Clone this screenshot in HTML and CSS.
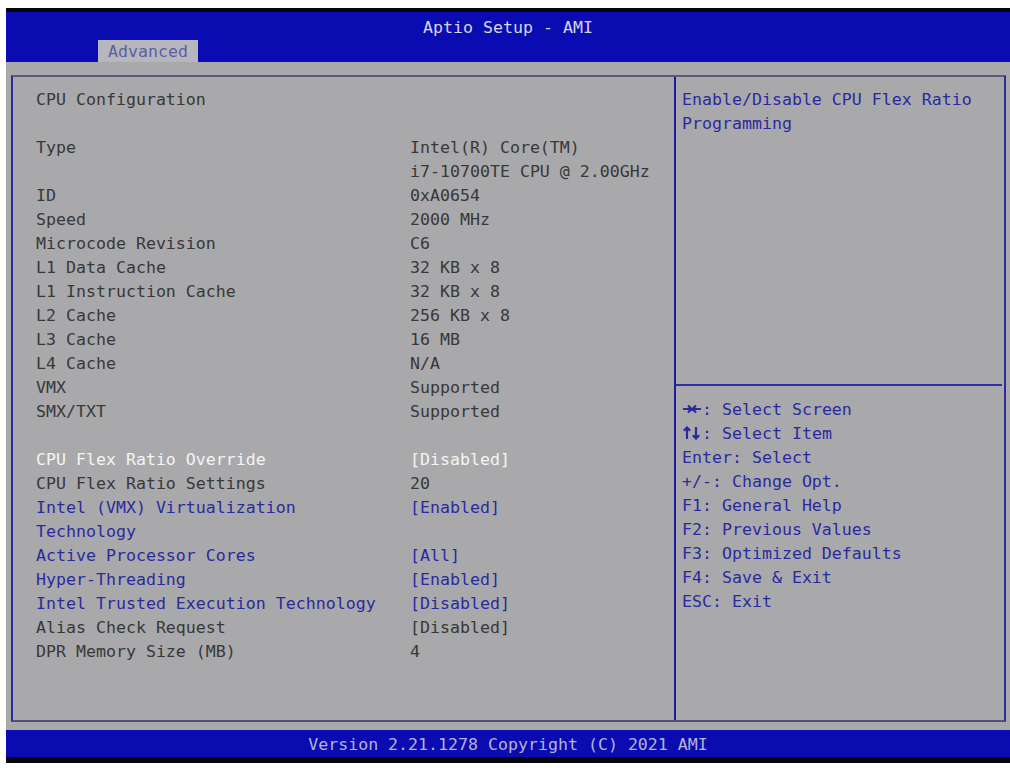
FILE: index.html
```html
<!DOCTYPE html>
<html>
<head>
  <title>Aptio Setup - AMI</title>
  <link rel="stylesheet" href="styles.css">
</head>
<body>

<div class="screen">
  <div class="header">
    <div class="title">Aptio Setup - AMI</div>
    <div class="tabs"><span class="tab">Advanced</span></div>
  </div>

  <div class="main">
    <div class="panel">
      <div class="items">
        <div class="row"><span>CPU Configuration</span><span></span></div>
        <div class="row"><span>&nbsp;</span><span></span></div>
        <div class="row"><span>Type</span><span>Intel(R) Core(TM)</span></div>
        <div class="row"><span></span><span>i7-10700TE CPU @ 2.00GHz</span></div>
        <div class="row"><span>ID</span><span>0xA0654</span></div>
        <div class="row"><span>Speed</span><span>2000 MHz</span></div>
        <div class="row"><span>Microcode Revision</span><span>C6</span></div>
        <div class="row"><span>L1 Data Cache</span><span>32 KB x 8</span></div>
        <div class="row"><span>L1 Instruction Cache</span><span>32 KB x 8</span></div>
        <div class="row"><span>L2 Cache</span><span>256 KB x 8</span></div>
        <div class="row"><span>L3 Cache</span><span>16 MB</span></div>
        <div class="row"><span>L4 Cache</span><span>N/A</span></div>
        <div class="row"><span>VMX</span><span>Supported</span></div>
        <div class="row"><span>SMX/TXT</span><span>Supported</span></div>
        <div class="row"><span>&nbsp;</span><span></span></div>
        <div class="row selected"><span>CPU Flex Ratio Override</span><span>[Disabled]</span></div>
        <div class="row"><span>CPU Flex Ratio Settings</span><span>20</span></div>
        <div class="row option"><span>Intel (VMX) Virtualization</span><span>[Enabled]</span></div>
        <div class="row option"><span>Technology</span><span></span></div>
        <div class="row option"><span>Active Processor Cores</span><span>[All]</span></div>
        <div class="row option"><span>Hyper-Threading</span><span>[Enabled]</span></div>
        <div class="row option"><span>Intel Trusted Execution Technology</span><span>[Disabled]</span></div>
        <div class="row"><span>Alias Check Request</span><span>[Disabled]</span></div>
        <div class="row"><span>DPR Memory Size (MB)</span><span>4</span></div>
      </div>

      <div class="side">
        <div class="help">Enable/Disable CPU Flex Ratio<br>Programming</div>
        <div class="keys">
          <div>
            <svg class="arrows" width="20" height="14" viewBox="0 0 20 14"><path d="M1 7H9M6 3.5L9.5 7L6 10.5M19 7H11M14 3.5L10.5 7L14 10.5" fill="none" stroke="currentColor" stroke-width="2.2"/></svg>: Select Screen
          </div>
          <div>
            <svg class="arrows" width="20" height="14" viewBox="0 0 20 14"><path d="M5 13V1.5M1.8 4.8L5 1.5L8.2 4.8M14 1V12.5M10.8 9.2L14 12.5L17.2 9.2" fill="none" stroke="currentColor" stroke-width="2.2"/></svg>: Select Item
          </div>
          <div>Enter: Select</div>
          <div>+/-: Change Opt.</div>
          <div>F1: General Help</div>
          <div>F2: Previous Values</div>
          <div>F3: Optimized Defaults</div>
          <div>F4: Save &amp; Exit</div>
          <div>ESC: Exit</div>
        </div>
      </div>
    </div>
  </div>

  <div class="footer">Version 2.21.1278 Copyright (C) 2021 AMI</div>
</div>

</body>
</html>
```

FILE: styles.css
```css
body { margin: 0; background: #fff; font-family: "DejaVu Sans Mono", "Liberation Mono", monospace; font-size: 16.6px; }
.screen { margin: 8px 0 0 6px; width: 1004px; height: 755px; display: flex; flex-direction: column; background: #a9a9ab; }

.header { height: 50px; background: #0b0bb2; border-top: 4px solid #050510; display: flex; flex-direction: column; }
.title { text-align: center; color: #d6d6e6; height: 28px; line-height: 32px; }
.tabs { flex: 1; display: flex; align-items: flex-end; padding-left: 92px; }
.tab { width: 100px; height: 22px; background: #b6b6bc; color: #5e5ea6; text-align: center; line-height: 24px; }

.main { flex: 1; padding: 13px 4px 8px 5px; }
.panel { height: 100%; box-sizing: border-box; border: 2px solid #2b2b96; border-top-color: #5a5a7e; border-bottom-color: #50507a; display: flex; }

.items { width: 663px; padding: 11px 0 0 23px; box-sizing: border-box; border-right: 2px solid #1c1ca0; }
.row { display: grid; grid-template-columns: 374px 1fr; height: 24px; line-height: 24px; color: #383838; white-space: pre; }
.row.option { color: #2a2aa0; }
.row.selected { color: #f4f4f4; }

.side { flex: 1; display: flex; flex-direction: column; }
.help { height: 296px; padding: 11px 0 0 6px; line-height: 24px; color: #2a2aa0; border-bottom: 2px solid #3030a6; margin-right: 2px; }
.keys { padding: 12px 0 0 6px; color: #2a2aa0; line-height: 24px; }
.keys div { height: 24px; }
.arrows { vertical-align: -1px; }

.footer { height: 27px; line-height: 30px; background: #0b0bb2; border-bottom: 6px solid #050510; color: #b4b4d4; text-align: center; }
```
